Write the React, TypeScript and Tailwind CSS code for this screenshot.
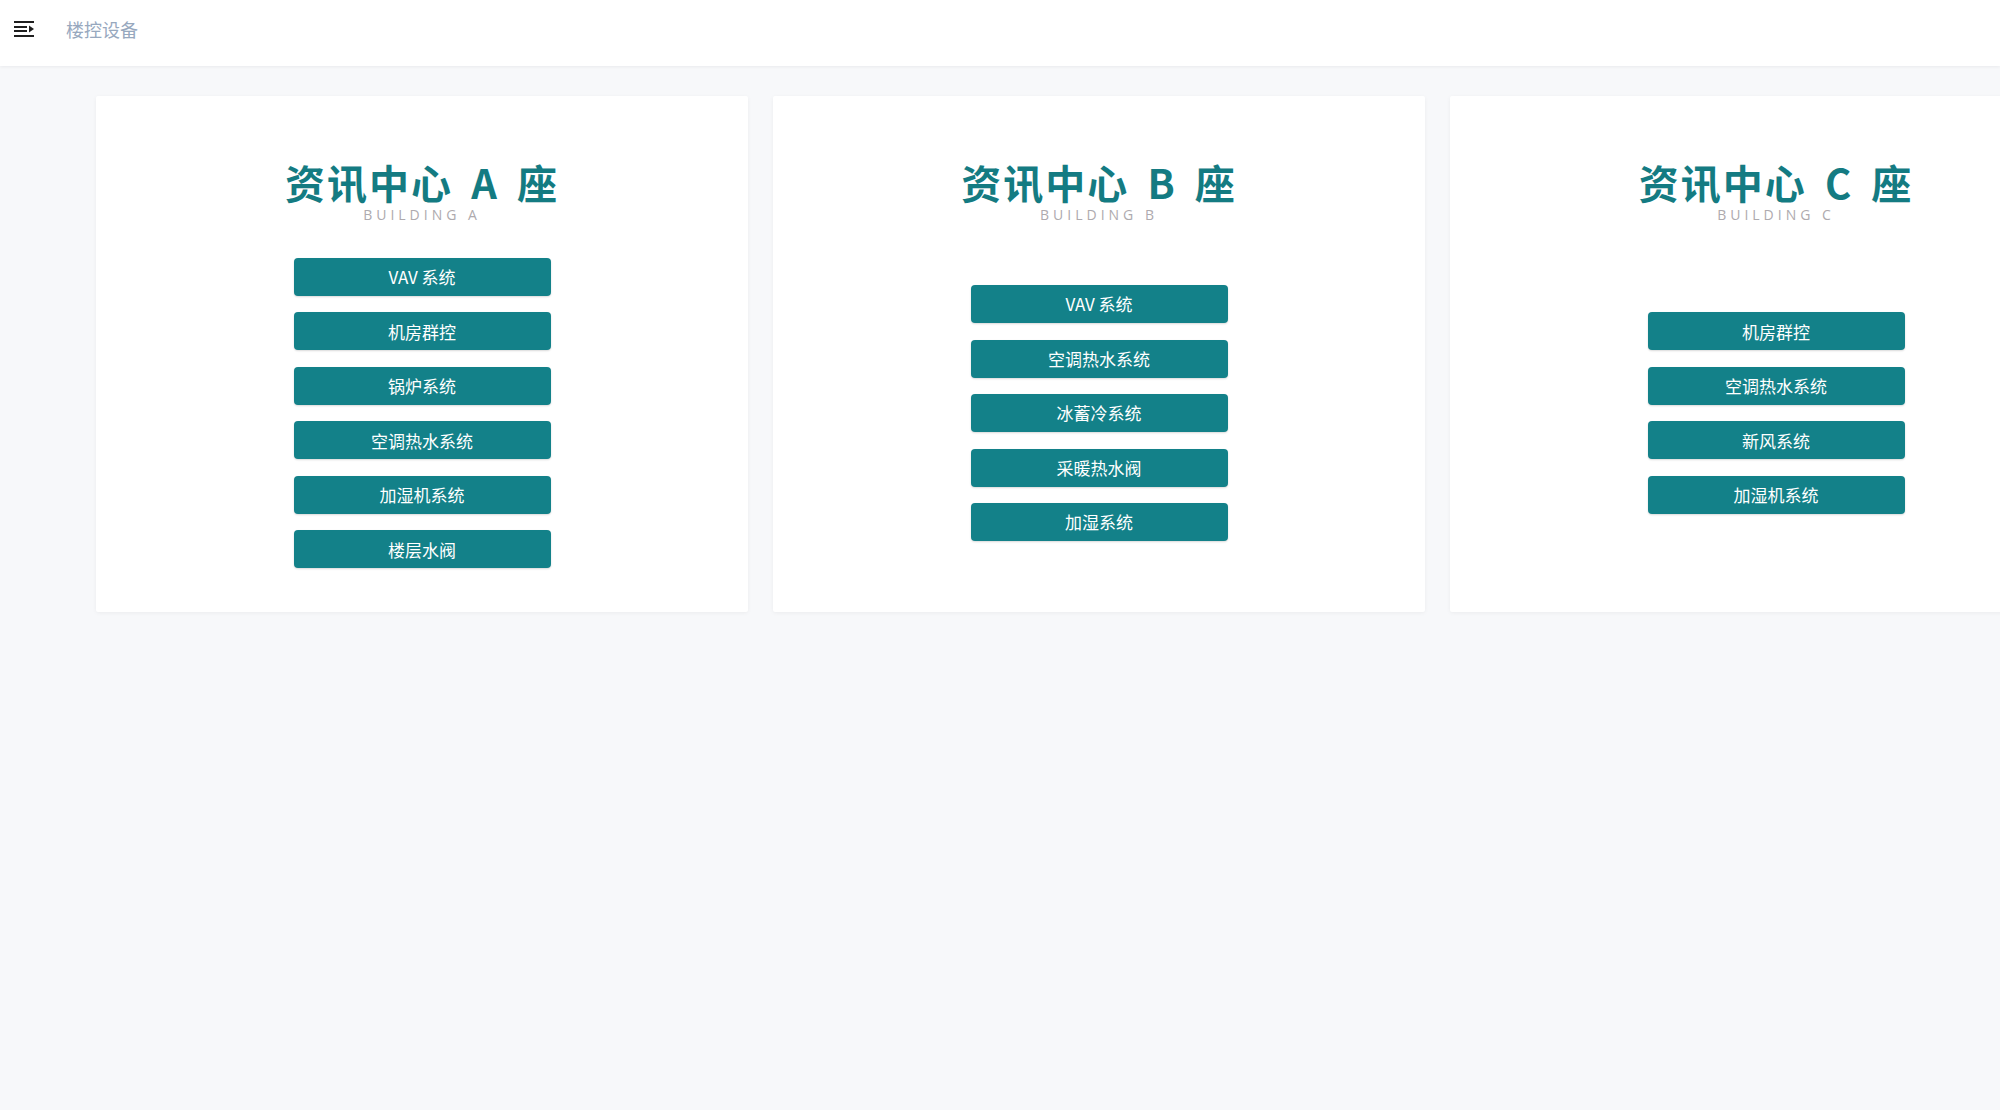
import React from 'react';

interface Building {
  name: string;
  code: string;
  systems: string[];
}

const BUILDINGS: Building[] = [
  {
    name: '资讯中心 A 座',
    code: 'BUILDING A',
    systems: ['VAV 系统', '机房群控', '锅炉系统', '空调热水系统', '加湿机系统', '楼层水阀'],
  },
  {
    name: '资讯中心 B 座',
    code: 'BUILDING B',
    systems: ['VAV 系统', '空调热水系统', '冰蓄冷系统', '采暖热水阀', '加湿系统'],
  },
  {
    name: '资讯中心 C 座',
    code: 'BUILDING C',
    systems: ['机房群控', '空调热水系统', '新风系统', '加湿机系统'],
  },
];

function Hamburger() {
  return (
    <svg width="22" height="18" viewBox="0 0 22 18" fill="#1f1f1f">
      <rect x="0" y="1" width="20" height="2" />
      <rect x="0" y="6" width="13" height="2" />
      <rect x="0" y="10" width="13" height="2" />
      <rect x="0" y="15" width="20" height="2" />
      <polygon points="15,5.5 20,9 15,12.5" />
    </svg>
  );
}

function BuildingCard({ building }: { building: Building }) {
  return (
    <div className="w-[652px] h-[516px] shrink-0 bg-white rounded-[2px] shadow-[0_1px_4px_rgba(0,0,0,0.05)] flex flex-col">
      {/* Title */}
      <div className="pt-[65px] flex flex-col items-center">
        <h2 className="h-[42px] leading-[42px] text-[40px] font-bold tracking-[2px] [word-spacing:7px] text-[#147b82] whitespace-pre">
          {building.name}
        </h2>
        <div className="mt-[3px] h-[18px] leading-[18px] text-[14px] tracking-[4px] text-[#aeaaae] font-['Open_Sans',sans-serif]">
          {building.code}
        </div>
      </div>

      {/* System buttons */}
      <div className="flex-1 pb-[10px] flex flex-col items-center justify-center gap-[16.5px]">
        {building.systems.map(sys => (
          <button
            key={sys}
            className="w-[257px] h-[38px] rounded-[4px] bg-[#138189] text-white text-[17px] shadow-[0_1px_2px_rgba(0,0,0,0.15)]"
          >
            {sys}
          </button>
        ))}
      </div>
    </div>
  );
}

export default function App() {
  return (
    <div className="min-h-screen bg-[#f7f8fa] font-['Noto_Sans_CJK_SC','Noto_Sans',sans-serif] overflow-hidden">
      {/* Navbar */}
      <div className="h-[66px] bg-white shadow-[0_1px_3px_rgba(0,21,41,0.06)]">
        <div className="h-[58px] flex items-center">
          <div className="pl-[14px] pr-[30px] flex items-center">
            <Hamburger />
          </div>
          <span className="text-[18px] text-[#97a8be]">楼控设备</span>
        </div>
      </div>

      {/* Buildings */}
      <div className="pt-[30px] pl-[96px] flex gap-[25px]">
        {BUILDINGS.map(b => (
          <BuildingCard key={b.code} building={b} />
        ))}
      </div>
    </div>
  );
}
